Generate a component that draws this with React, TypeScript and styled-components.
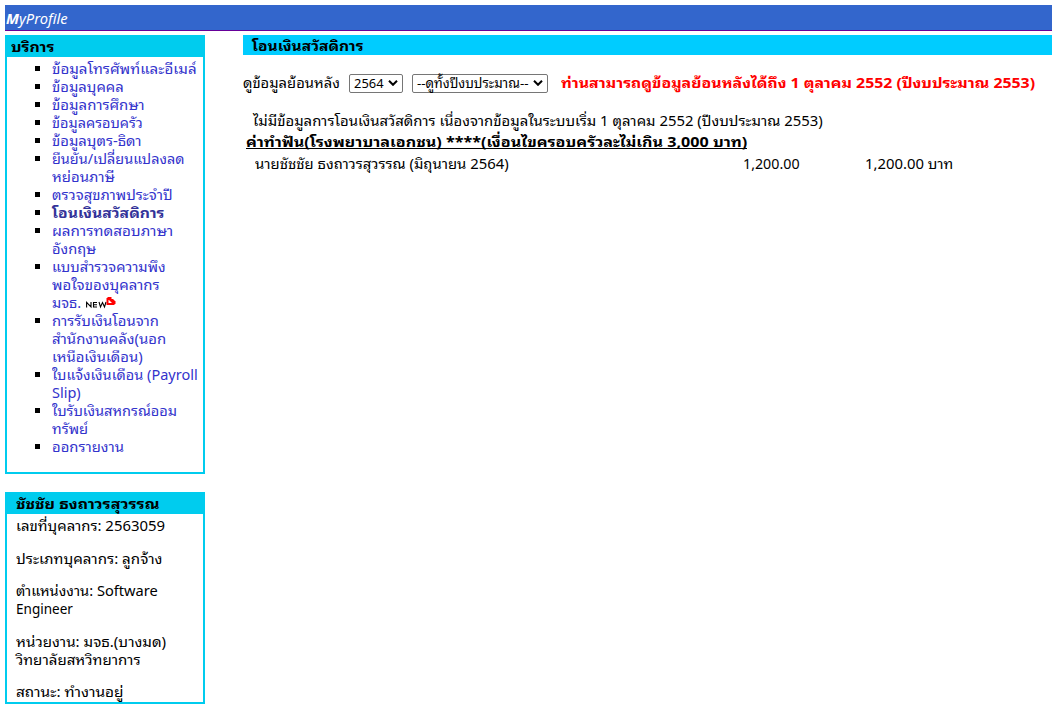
import React, { useLayoutEffect, useRef, useState } from 'react';
import styled, { createGlobalStyle } from 'styled-components';

const GlobalStyle = createGlobalStyle`
  html, body { margin: 0; padding: 0; background: #fff; overflow: hidden; }
  body {
    font-family: Tahoma, 'Noto Sans', 'Noto Sans Thai Looped', Loma, Waree, Garuda, 'Noto Sans Thai', sans-serif;
    font-size: 14px;
    line-height: 18px;
    color: #000;
  }
  ul { margin: 0; padding: 0; list-style: none; }
  p, h1, h2 { margin: 0; font-size: inherit; font-weight: inherit; }
`;

const LineBox = styled.span<{ $w: number }>`
  display: block;
  width: ${(p) => p.$w}px;
  height: 18px;
  white-space: pre;
`;
const LineText = styled.span`
  display: inline-block;
  line-height: 18px;
  transform-origin: 0 50%;
`;

/* One line of text, fitted to a fixed measure whatever face is available. */
function Line({ w, children }: { w: number; children: React.ReactNode }) {
  const ref = useRef<HTMLSpanElement>(null);
  const [scale, setScale] = useState(1);
  useLayoutEffect(() => {
    const width = ref.current?.offsetWidth;
    if (width) setScale(w / width);
  }, [w]);
  return (
    <LineBox $w={w}>
      <LineText ref={ref} style={{ transform: `scaleX(${scale})` }}>{children}</LineText>
    </LineBox>
  );
}

const Page = styled.div`
  padding: 5px 0 0 5px;
  width: 1052px;
  height: 715px;
  box-sizing: border-box;
`;
const Banner = styled.header`
  height: 26px;
  box-sizing: border-box;
  border-bottom: 1px solid #609;
  background: #36c;
  color: #fff;
  font-style: italic;
  padding: 5px 0 0 1px;
`;
const Columns = styled.div`
  display: flex;
  gap: 38px;
  margin-top: 4px;
`;
const Sidebar = styled.aside`
  display: flex;
  flex-direction: column;
  gap: 18px;
  width: 200px;
  flex: none;
`;
const Panel = styled.section<{ $h: number }>`
  box-sizing: border-box;
  height: ${(p) => p.$h}px;
  border: 2px solid #00ccee;
`;
const PanelTitle = styled.h2<{ $indent: number }>`
  height: 20px;
  box-sizing: border-box;
  padding: 1px 0 0 ${(p) => p.$indent}px;
  background: #00ccee;
  font-weight: bold;
`;
const Menu = styled.ul`
  padding: 3px 0 0 28px;
`;
const MenuItem = styled.li<{ $active?: boolean }>`
  display: flex;
  gap: 12px;
  color: ${(p) => (p.$active ? '#333399' : '#3333cc')};
  font-weight: ${(p) => (p.$active ? 'bold' : 'normal')};
`;
const Bullet = styled.span`
  width: 5px;
  height: 5px;
  margin-top: 6px;
  background: #000;
  flex: none;
`;
const Lines = styled.div``;
const BadgeRow = styled.div`
  display: flex;
  gap: 5px;
`;
const NewIcon = styled.svg`
  display: block;
  margin-top: 3px;
`;
const Facts = styled.div`
  padding: 3px 0 0 9px;
  display: flex;
  flex-direction: column;
  gap: 14.6px;
`;
const Main = styled.main`
  flex: 1;
  min-width: 0;
`;
const MainTitle = styled.h1`
  height: 20px;
  box-sizing: border-box;
  padding: 2px 0 0 9px;
  background: #0cf;
  font-weight: bold;
`;
const Filters = styled.div`
  display: flex;
  align-items: center;
  height: 20px;
  margin-top: 18px;
`;
const Select = styled.div<{ $w: number; $ml: number }>`
  display: flex;
  align-items: center;
  justify-content: space-between;
  box-sizing: border-box;
  width: ${(p) => p.$w}px;
  height: 19px;
  margin-left: ${(p) => p.$ml}px;
  padding: 0 4px;
  border: 1px solid #767676;
  border-radius: 2px;
  font-size: 13.33px;
`;
const Notice = styled.strong`
  color: #f00;
  margin-left: 13px;
`;
const Message = styled.p`
  margin: 19px 0 0 10px;
`;
const Category = styled.p`
  display: flex;
  margin: 3px 0 0 3px;
  font-weight: bold;
`;
const Underlined = styled.span`
  border-bottom: 1px solid #000;
  height: 15px;
`;
const Payment = styled.div`
  display: grid;
  grid-template-columns: 488px 122px auto;
  margin: 6px 0 0 12px;
`;

const menu: { lines: [string, number][]; active?: boolean; isNew?: boolean }[] = [
  { lines: [['ข้อมูลโทรศัพท์และอีเมล์', 145]] },
  { lines: [['ข้อมูลบุคคล', 72]] },
  { lines: [['ข้อมูลการศึกษา', 93]] },
  { lines: [['ข้อมูลครอบครัว', 91]] },
  { lines: [['ข้อมูลบุตร-ธิดา', 89]] },
  { lines: [['ยืนยัน/เปลี่ยนแปลงลด', 133], ['หย่อนภาษี', 63]] },
  { lines: [['ตรวจสุขภาพประจำปี', 121]] },
  { lines: [['โอนเงินสวัสดิการ', 112]], active: true },
  { lines: [['ผลการทดสอบภาษา', 121], ['อังกฤษ', 44]] },
  { lines: [['แบบสำรวจความพึง', 114], ['พอใจของบุคลากร', 108], ['มจธ.', 29]], isNew: true },
  { lines: [['การรับเงินโอนจาก', 107], ['สำนักงานคลัง(นอก', 114], ['เหนือเงินเดือน)', 91]] },
  { lines: [['ใบแจ้งเงินเดือน (Payroll', 146], ['Slip)', 29]] },
  { lines: [['ใบรับเงินสหกรณ์ออม', 125], ['ทรัพย์', 36]] },
  { lines: [['ออกรายงาน', 72]] },
];

const facts: [string, number][][] = [
  [['เลขที่บุคลากร: 2563059', 149]],
  [['ประเภทบุคลากร: ลูกจ้าง', 146]],
  [['ตำแหน่งงาน: Software', 142], ['Engineer', 57]],
  [['หน่วยงาน: มจธ.(บางมด)', 150], ['วิทยาลัยสหวิทยาการ', 125]],
  [['สถานะ: ทำงานอยู่', 108]],
];

const NewBadge = () => (
  <NewIcon width="30" height="12" viewBox="0 0 30 12" fill="none">
    <path d="M.6 10.5V5.4l4.4 4.6V5M11 5.5H7.5V10H11M7.5 7.7H11M13 5l1.5 5 2-4.5 2 4.5L20 5" stroke="#000" strokeWidth="1.1" />
    <path d="M20.5 1h1V0h4v2h2v1h1v1h1v3h-1v1h-8z" fill="#f00" />
    <path d="M22.5 3h1v1h1v1h1v1h-3z" fill="#fff" />
  </NewIcon>
);

const Chevron = () => (
  <svg width="10" height="6" viewBox="0 0 10 6" fill="none">
    <path d="M1 .8l4 4 4-4" stroke="#000" strokeWidth="2" />
  </svg>
);

export default function App() {
  return (
    <Page>
      <GlobalStyle />
      <Banner><Line w={62}><b>M</b>yProfile</Line></Banner>
      <Columns>
        <Sidebar>
          <Panel $h={439}>
            <PanelTitle $indent={4}><Line w={43}>บริการ</Line></PanelTitle>
            <Menu>
              {menu.map((item) => (
                <MenuItem key={item.lines[0][0]} $active={item.active}>
                  <Bullet />
                  <Lines>
                    {item.lines.map(([text, w], i) =>
                      item.isNew && i === item.lines.length - 1 ? (
                        <BadgeRow key={text}><Line w={w}>{text}</Line><NewBadge /></BadgeRow>
                      ) : (
                        <Line key={text} w={w}>{text}</Line>
                      ),
                    )}
                  </Lines>
                </MenuItem>
              ))}
            </Menu>
          </Panel>
          <Panel $h={212}>
            <PanelTitle $indent={9}><Line w={144}>ชัชชัย ธงถาวรสุวรรณ</Line></PanelTitle>
            <Facts>
              {facts.map((lines) => (
                <Lines key={lines[0][0]}>
                  {lines.map(([text, w]) => <Line key={text} w={w}>{text}</Line>)}
                </Lines>
              ))}
            </Facts>
          </Panel>
        </Sidebar>
        <Main>
          <MainTitle><Line w={111}>โอนเงินสวัสดิการ</Line></MainTitle>
          <Filters>
            <Line w={97}>ดูข้อมูลย้อนหลัง</Line>
            <Select $w={54} $ml={9}><Line w={30}>2564</Line><Chevron /></Select>
            <Select $w={136} $ml={9}><Line w={112}>--ดูทั้งปีงบประมาณ--</Line><Chevron /></Select>
            <Notice><Line w={474}>ท่านสามารถดูข้อมูลย้อนหลังได้ถึง 1 ตุลาคม 2552 (ปีงบประมาณ 2553)</Line></Notice>
          </Filters>
          <Message><Line w={570}>ไม่มีข้อมูลการโอนเงินสวัสดิการ เนื่องจากข้อมูลในระบบเริ่ม 1 ตุลาคม 2552 (ปีงบประมาณ 2553)</Line></Message>
          <Category>
            <Underlined><Line w={501}>ค่าทำฟัน(โรงพยาบาลเอกชน) ****(เงื่อนไขครอบครัวละไม่เกิน 3,000 บาท)</Line></Underlined>
          </Category>
          <Payment>
            <Line w={254}>นายชัชชัย ธงถาวรสุวรรณ (มิถุนายน 2564)</Line>
            <Line w={57}>1,200.00</Line>
            <Line w={88}>1,200.00 บาท</Line>
          </Payment>
        </Main>
      </Columns>
    </Page>
  );
}
